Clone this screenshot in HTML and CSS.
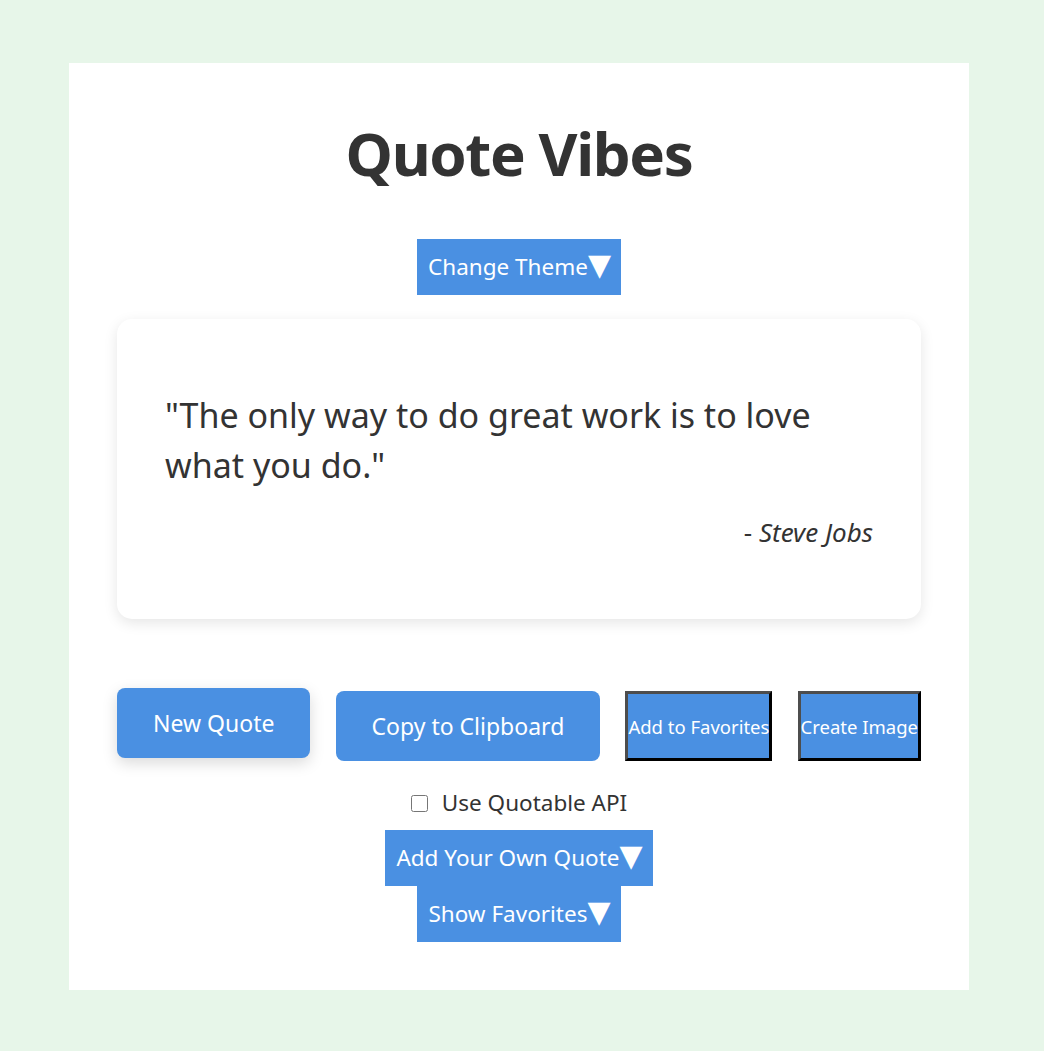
FILE: index.html
```html
<!DOCTYPE html>
<html lang="en">
<head>
<meta charset="utf-8">
<title>Quote Vibes</title>
<link rel="stylesheet" href="styles.css">
</head>
<body>
<main class="container">
  <h1 class="title">Quote Vibes</h1>
  <div class="center">
    <button class="toggle">Change Theme<span class="caret">▼</span></button>
  </div>
  <section class="quote-card">
    <p class="quote-text">"The only way to do great work is to love what you do."</p>
    <p class="quote-author">- <em>Steve Jobs</em></p>
  </section>
  <div class="actions">
    <button class="btn btn-primary is-hover">New Quote</button>
    <button class="btn btn-primary">Copy to Clipboard</button>
    <button class="btn btn-plain">Add to Favorites</button>
    <button class="btn btn-plain">Create Image</button>
  </div>
  <label class="api-option"><input type="checkbox" class="api-check"> Use Quotable API</label>
  <div class="toggles">
    <button class="toggle">Add Your Own Quote<span class="caret">▼</span></button>
    <button class="toggle">Show Favorites<span class="caret">▼</span></button>
  </div>
</main>
</body>
</html>
```
FILE: styles.css
```css
* { box-sizing: border-box; }

body {
  margin: 0;
  padding: 63px 75px 61px 69px;
  background: #e7f6e9;
  font-family: "Noto Sans", "Open Sans", sans-serif;
  color: #333;
}

.container {
  width: 900px;
  margin: 0 auto;
  background: #fff;
  padding: 48px;
  display: flex;
  flex-direction: column;
}

.title {
  margin: 4px 0 0;
  font-size: 60px;
  line-height: 77px;
  letter-spacing: -1.4px;
  font-weight: 700;
  text-align: center;
  color: #333;
}

.center {
  display: flex;
  justify-content: center;
  margin-top: 47px;
}

.toggle {
  font-family: inherit;
  font-size: 22.5px;
  line-height: 32px;
  padding: 12px 10px 12px 11px;
  background: #4a90e2;
  color: #fff;
  border: none;
  border-radius: 0;
  white-space: nowrap;
}

.caret {
  font-family: "DejaVu Sans", sans-serif;
  font-size: 30px;
  line-height: 0;
}

.quote-card {
  margin-top: 24px;
  height: 300px;
  padding: 48px;
  background: #fff;
  border-radius: 15px;
  box-shadow: 0 4px 14px rgba(0, 0, 0, 0.1);
  display: flex;
  flex-direction: column;
  justify-content: center;
  gap: 26px;
}

.quote-text {
  margin: 0;
  font-size: 34px;
  line-height: 50px;
}

.quote-author {
  margin: 0;
  font-size: 26px;
  line-height: 32px;
  text-align: right;
}

.actions {
  margin-top: 72px;
  display: flex;
  justify-content: space-between;
  align-items: stretch;
}

.btn {
  font-family: inherit;
  color: #fff;
  background: #4a90e2;
}

.btn-primary {
  font-size: 23px;
  line-height: 32px;
  padding: 19px 36px;
  border: none;
  border-radius: 8px;
}

.is-hover {
  transform: translateY(-3px);
  box-shadow: 0 5px 15px rgba(0, 0, 0, 0.15);
}

.btn-plain {
  font-size: 18.5px;
  padding: 0;
  border: 3px solid;
  border-color: #4d4d4d #000 #000 #4d4d4d;
  border-radius: 0;
}

.api-option {
  margin-top: 27px;
  align-self: center;
  display: flex;
  align-items: center;
  gap: 14px;
  font-size: 22.5px;
  line-height: 30px;
}

.api-check {
  width: 17px;
  height: 17px;
  margin: 0;
}

.toggles {
  margin-top: 12px;
  display: flex;
  flex-direction: column;
  align-items: center;
}
```
